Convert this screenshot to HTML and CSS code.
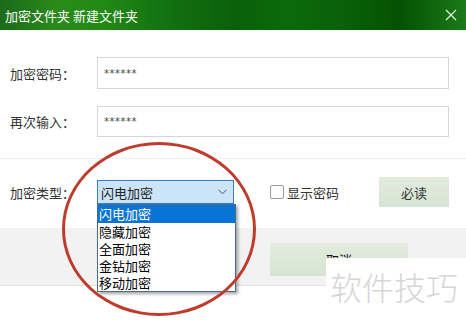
FILE: index.html
```html
<!DOCTYPE html>
<html lang="zh">
<head>
<meta charset="utf-8">
<link rel="stylesheet" href="styles.css">
</head>
<body>
<div class="win">
  <div class="titlebar">
    <span class="title">加密文件夹 新建文件夹</span>
    <svg class="close" width="12" height="12" viewBox="0 0 12 12"><path d="M1 1L11 11M11 1L1 11" stroke="#e8f5e0" stroke-width="1.2" fill="none"/></svg>
  </div>
  <div class="form">
    <div class="row r1">
      <span class="label">加密密码：</span>
      <div class="input">******</div>
    </div>
    <div class="row r2">
      <span class="label">再次输入：</span>
      <div class="input">******</div>
    </div>
  </div>
  <div class="sep"></div>
  <div class="row r3">
    <span class="label">加密类型：</span>
    <div class="select">
      <span>闪电加密</span>
      <svg class="chev" width="9" height="6" viewBox="0 0 9 6"><path d="M0.5 0.8L4.5 4.8L8.5 0.8" stroke="#555" stroke-width="1" fill="none"/></svg>
      <ul class="list">
        <li class="sel">闪电加密</li>
        <li>隐藏加密</li>
        <li>全面加密</li>
        <li>金钻加密</li>
        <li>移动加密</li>
      </ul>
    </div>
    <label class="check"><span class="box"></span>显示密码</label>
    <div class="btn read">必读</div>
  </div>
  <div class="footer">
    <div class="btn cancel"><span class="cancel-text">取消</span></div>
  </div>
  <div class="circle"></div>
  <div class="watermark">软件技巧</div>
</div>
</body>
</html>
```

FILE: styles.css
```css
* { box-sizing: border-box; margin: 0; padding: 0; }
body {
  width: 466px; height: 327px; overflow: hidden; background: #fff;
  font-family: "Microsoft YaHei", "Noto Sans CJK SC", sans-serif;
  font-size: 13px; color: #222;
}
.win { position: relative; width: 466px; height: 327px; }
.titlebar {
  height: 30px; display: flex; align-items: center; justify-content: space-between;
  padding: 0 9px 0 5px;
  background: linear-gradient(90deg, #1b6a19 0%, #2a8a1a 12%, #228a14 22%, #137212 35%, #0a6008 50%, #0b6a0b 62%, #095f08 75%, #045204 86%, #1c7a18 100%);
  color: #fff;
}
.title { font-size: 13px; letter-spacing: 0; line-height: 1; }
.close { display: block; }
.form { padding-top: 27px; display: flex; flex-direction: column; gap: 17px; }
.row { display: flex; align-items: center; padding-left: 10px; }
.label { width: 87px; font-size: 13px; color: #333; }
.input {
  width: 352px; height: 32px; border: 1px solid #d6d6d6; background: #fff;
  padding-left: 6px; display: flex; align-items: center;
  font-family: "DejaVu Sans", sans-serif; font-size: 10px; color: #444; letter-spacing: 0.5px;
}
.r2 .input { height: 31px; }
.sep { margin-top: 21px; height: 1px; background: #eeeeee; }
.r3 { margin-top: 18px; height: 30px; }
.r3 .label { width: 87px; }
.select {
  position: relative; width: 137px; height: 24px;
  border: 1px solid #3c7fbf; background: #cce4f7;
  display: flex; align-items: center; justify-content: space-between;
  padding: 0 6px 0 3px; font-size: 13px; color: #222;
}
.chev { display: block; }
.list {
  position: absolute; left: -1px; top: 23px; width: 139px; list-style: none;
  background: #fff; border: 1px solid #4a6c8c; z-index: 3;
  box-shadow: 2px 2px 3px rgba(0,0,0,0.35);
}
.list li { height: 17px; line-height: 17px; padding-left: 1px; font-size: 13px; color: #000; overflow: hidden; }
.list li.sel { background: #0a74d6; color: #fff; height: 18px; line-height: 18px; }
.check { display: flex; align-items: center; margin-left: 36px; font-size: 13px; color: #333; }
.box { width: 14px; height: 14px; border: 1px solid #9a9a9a; border-radius: 2px; background: #fff; margin-right: 3px; }
.btn {
  display: flex; align-items: center; justify-content: center;
  background: linear-gradient(180deg, #e3ecdf 0%, #d6e3d2 100%);
  font-size: 13px; color: #333;
}
.read { width: 70px; height: 30px; margin-left: 40px; }
.footer {
  margin-top: 21px; height: 58px; background: #f2f2f2; border-bottom: 1px solid #e2e2e2;
  display: flex; padding: 15px 0 0 270px;
}
.cancel { width: 138px; height: 33px; color: #111; }
.cancel-text { line-height: 14px; }
.circle {
  position: absolute; left: 62px; top: 142px; width: 194px; height: 174px;
  border: 3px solid #bf3b2c; border-radius: 50%; z-index: 4; pointer-events: none;
}
.watermark {
  position: absolute; left: 326px; top: 258px; width: 140px; height: 69px;
  background: #fff; color: #d6d6d6; font-size: 32px; font-weight: 300;
  padding: 9px 0 0 4px; line-height: 1.2; z-index: 5;
  font-family: "Noto Sans CJK SC", sans-serif;
}
```
